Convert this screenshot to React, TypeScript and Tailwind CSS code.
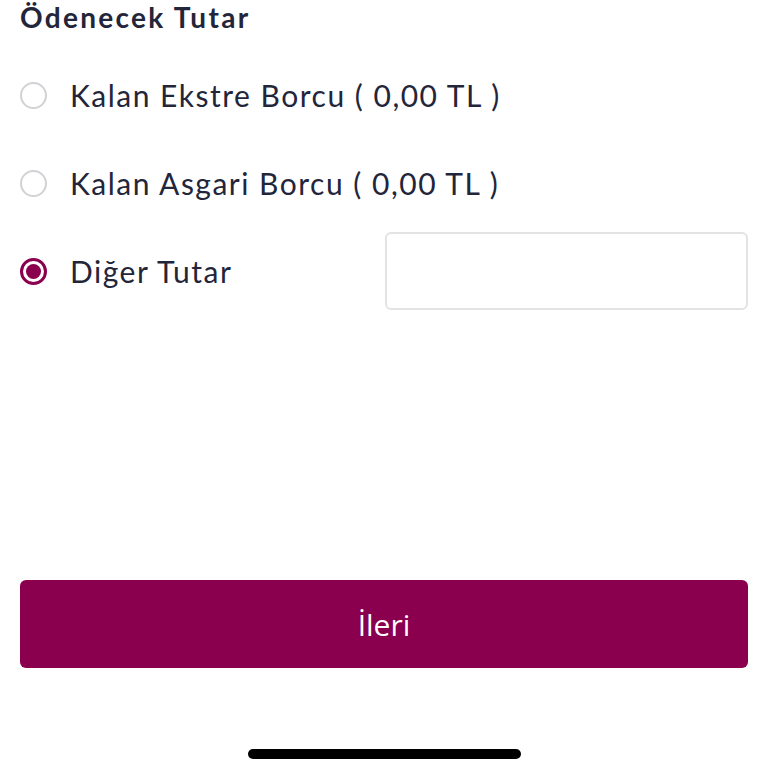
import React, { useState } from 'react';

// Payment amount selection screen

interface OptionProps {
  label: string;
  selected: boolean;
  onSelect: () => void;
  children?: React.ReactNode;
}

function RadioOption({ label, selected, onSelect, children }: OptionProps) {
  return (
    <div className="flex h-[88px] items-center">
      <button
        type="button"
        onClick={onSelect}
        className="flex items-center gap-[23px] text-left"
      >
        {selected ? (
          <span className="flex h-[27px] w-[27px] items-center justify-center rounded-full border-[3px] border-[#8a004f]">
            <span className="h-[15px] w-[15px] rounded-full bg-[#8a004f]" />
          </span>
        ) : (
          <span className="h-[27px] w-[27px] rounded-full border-2 border-[#d2d2d6]" />
        )}
        <span className="text-[30px] leading-none tracking-[1.5px] text-[#23263a]">{label}</span>
      </button>
      {children}
    </div>
  );
}

export default function App() {
  const [choice, setChoice] = useState(2);
  const [amount, setAmount] = useState('');

  return (
    <div
      className="flex h-[768px] w-[768px] flex-col bg-white px-[20px]"
      style={{ fontFamily: 'Lato, "Noto Sans", sans-serif' }}
    >
      <h2 className="mt-[1px] text-[28px] font-bold leading-[32px] tracking-[2.3px] text-[#23263a]">
        Ödenecek Tutar
      </h2>

      <div className="mt-[18px] flex flex-col">
        <RadioOption
          label="Kalan Ekstre Borcu ( 0,00 TL )"
          selected={choice === 0}
          onSelect={() => setChoice(0)}
        />
        <RadioOption
          label="Kalan Asgari Borcu ( 0,00 TL )"
          selected={choice === 1}
          onSelect={() => setChoice(1)}
        />
        <RadioOption
          label="Diğer Tutar"
          selected={choice === 2}
          onSelect={() => setChoice(2)}
        >
          <input
            value={amount}
            onChange={(e) => setAmount(e.target.value)}
            className="ml-auto h-[78px] w-[363px] rounded-[6px] border-2 border-[#e3e3e6] px-3 text-[26px] outline-none"
          />
        </RadioOption>
      </div>

      <button
        type="button"
        className="mt-[265px] flex h-[88px] w-full items-center justify-center rounded-[6px] bg-[#8a004f] text-[30px] text-white"
        style={{ fontFamily: '"Open Sans", sans-serif' }}
      >
        İleri
      </button>

      <div className="mt-[81px] flex justify-center">
        <div className="h-[10px] w-[273px] rounded-full bg-black" />
      </div>
    </div>
  );
}
